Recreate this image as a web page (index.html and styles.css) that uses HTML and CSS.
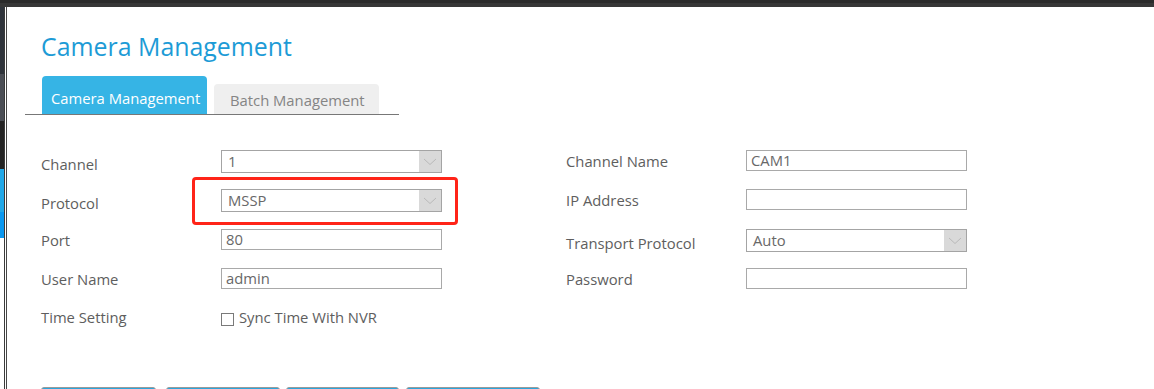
FILE: index.html
```html
<!DOCTYPE html>
<html lang="en">
<head>
  <meta charset="UTF-8">
  <meta name="viewport" content="width=device-width, initial-scale=1.0">
  <title>Camera Management</title>
  <link rel="stylesheet" href="styles.css">
</head>
<body>
  <div class="topbar"></div>

  <div class="shell">
    <div class="side"></div>
    <div class="edge"></div>

    <div class="dialog">
      <h1 class="title">Camera Management</h1>

      <div class="tabs">
        <div class="tab active">Camera Management</div>
        <div class="tab">Batch Management</div>
      </div>

      <div class="form">
        <!-- row 1 -->
        <div class="label near-select">Channel</div>
        <div class="select"><span class="value">1</span><span class="arrow"><svg width="22" height="21" viewBox="0 0 22 21"><polyline points="5,8 11,13.5 17,8" fill="none" stroke="#b9b9b9" stroke-width="1"/></svg></span></div>
        <div class="label">Channel Name</div>
        <div class="input">CAM1</div>

        <!-- row 2 -->
        <div class="label near-select">Protocol</div>
        <div class="select"><span class="value">MSSP</span><span class="arrow"><svg width="22" height="21" viewBox="0 0 22 21"><polyline points="5,8 11,13.5 17,8" fill="none" stroke="#b9b9b9" stroke-width="1"/></svg></span></div>
        <div class="label">IP Address</div>
        <div class="input"></div>

        <!-- row 3 -->
        <div class="label">Port</div>
        <div class="input">80</div>
        <div class="label near-select">Transport Protocol</div>
        <div class="select"><span class="value">Auto</span><span class="arrow"><svg width="22" height="21" viewBox="0 0 22 21"><polyline points="5,8 11,13.5 17,8" fill="none" stroke="#b9b9b9" stroke-width="1"/></svg></span></div>

        <!-- row 4 -->
        <div class="label">User Name</div>
        <div class="input">admin</div>
        <div class="label">Password</div>
        <div class="input"></div>

        <!-- row 5 -->
        <div class="label flush">Time Setting</div>
        <label class="check"><span class="box"></span>Sync Time With NVR</label>
      </div>

      <div class="buttons">
        <span class="btn"></span>
        <span class="btn"></span>
        <span class="btn"></span>
        <span class="btn"></span>
      </div>

      <div class="highlight"></div>
    </div>
  </div>
</body>
</html>
```

FILE: styles.css
```css
html, body {
  margin: 0;
  height: 389px;
  overflow: hidden;
}

body {
  font-family: "Open Sans", "Noto Sans", sans-serif;
  font-size: 14.8px;
  color: #5e5e5e;
  background-color: #fff;
}

.topbar {
  height: 3px;
  background-color: #2b2b2b;
  border-bottom: 4px solid #373737;
}

.shell {
  display: flex;
  height: 382px;
}

.side {
  flex: none;
  width: 4px;
  background: linear-gradient(to bottom,
    #2f343b 0, #2f343b 67px,
    #4b4e55 67px, #4b4e55 114px,
    #232323 114px, #232323 162px,
    #22a8e8 162px, #22a8e8 205px,
    #0a98f0 205px, #0a98f0 231px,
    #fff 231px);
}

.edge {
  flex: none;
  width: 1px;
  background-color: #fff;
  border-left: 1px solid #3a3a3a;
  border-right: 1px solid #474747;
}

.dialog {
  flex: 1;
  min-width: 0;
  position: relative;
  overflow: hidden;
  background-color: #fff;
}

.title {
  margin: 23px 0 0 34px;
  font-size: 24.9px;
  font-weight: normal;
  line-height: 32px;
  color: #1d9bd6;
}

.tabs {
  display: flex;
  align-items: flex-end;
  gap: 7px;
  width: 357px;
  margin: 14px 0 0 18px;
  padding-left: 17px;
  border-bottom: 1px solid #777;
}

.tab {
  width: 165px;
  height: 30px;
  box-sizing: border-box;
  padding: 6px 0 0 16px;
  line-height: 20px;
  color: #858585;
  background-color: #efefef;
  border-radius: 4px 4px 0 0;
}

.tab.active {
  height: 38px;
  padding: 12px 0 0 9px;
  color: #fff;
  background-color: #36b4e5;
}

.form {
  display: grid;
  grid-template-columns: 180px 345px 180px 221px;
  grid-template-rows: 39px 40px 39px 39px 20px;
  align-items: start;
  margin: 35px 0 0 34px;
  line-height: 20px;
}

.label {
  padding-top: 1px;
}

.label.near-select {
  padding-top: 3.5px;
}

.label.flush {
  padding-top: 0;
}

.input {
  width: 221px;
  height: 21px;
  box-sizing: border-box;
  padding-left: 4px;
  border: 1px solid #a9a9a9;
  line-height: 19px;
  color: #686868;
}

.select {
  display: flex;
  width: 221px;
  height: 23px;
  box-sizing: border-box;
  border: 1px solid #a4a4a4;
  line-height: 21px;
  color: #686868;
}

.select .value {
  flex: 1;
  padding-left: 6px;
}

.select .arrow {
  width: 22px;
  background-color: #d9d9d9;
}

.select .arrow svg {
  display: block;
}

.check {
  display: flex;
  align-items: flex-start;
  gap: 5px;
}

.check .box {
  width: 13px;
  height: 13px;
  box-sizing: border-box;
  margin-top: 6px;
  border: 1px solid #7a7a7a;
  background-color: #fff;
}

.buttons {
  display: flex;
  margin: 60px 0 0 34px;
}

.btn {
  width: 115px;
  height: 30px;
  box-sizing: border-box;
  border: 1px solid #9a9a9a;
  border-radius: 3px;
  background-color: #2aa6dc;
}

.btn:nth-child(2) {
  width: 114px;
  margin-left: 10px;
}

.btn:nth-child(3) {
  width: 113px;
  margin-left: 6px;
}

.btn:nth-child(4) {
  width: 134px;
  margin-left: 7px;
}

/* red annotation frame over the protocol row */
.highlight {
  position: absolute;
  left: 185px;
  top: 170px;
  width: 266px;
  height: 48px;
  box-sizing: border-box;
  border: 3px solid #ff2418;
  border-radius: 4px;
}
```
